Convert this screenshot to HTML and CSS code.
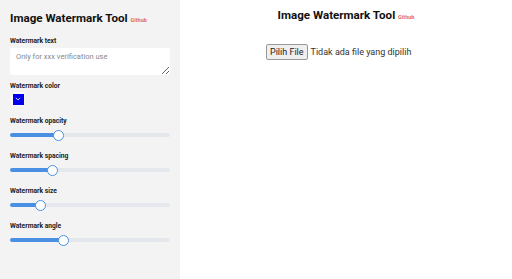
FILE: index.html
```html
<!DOCTYPE html>
<html>
  <head>
    <title>Image Watermark Tool</title>
    <link rel="stylesheet" href="styles.css">
  </head>
  <body>
    <div class="layout">
      <aside class="sidebar">
        <h1>Image Watermark Tool <a class="github" href="#">Github</a></h1>

        <label class="field-label first">Watermark text</label>
        <textarea class="text-input" placeholder="Only for xxx verification use"></textarea>

        <label class="field-label">Watermark color</label>
        <div class="color-box"><span class="swatch"><svg width="6" height="4" viewBox="0 0 6 4"><path d="M0.8 0.8 L3 3 L5.2 0.8" fill="none" stroke="#fff" stroke-width="0.8"/></svg></span></div>

        <label class="field-label">Watermark opacity</label>
        <input class="slider" type="range" min="0" max="100" value="29" style="--fill: 29%">

        <label class="field-label">Watermark spacing</label>
        <input class="slider" type="range" min="0" max="100" value="25" style="--fill: 25%">

        <label class="field-label">Watermark size</label>
        <input class="slider" type="range" min="0" max="100" value="17" style="--fill: 17%">

        <label class="field-label">Watermark angle</label>
        <input class="slider" type="range" min="0" max="100" value="32" style="--fill: 32%">
      </aside>

      <main class="content">
        <h1>Image Watermark Tool <a class="github" href="#">Github</a></h1>
        <div class="file-row">
          <span class="file-btn">Pilih File</span>
          <span class="file-name">Tidak ada file yang dipilih</span>
        </div>
      </main>
    </div>
  </body>
</html>
```

FILE: styles.css
```css
body {
  margin: 0;
  font-family: Roboto, "Liberation Sans", sans-serif;
  background: #fff;
}

.layout {
  display: flex;
  height: 279px;
}

.sidebar {
  width: 160px;
  padding: 10px 10px 0;
  background-color: #f3f3f3;
  display: flex;
  flex-direction: column;
  align-items: flex-start;
}

.sidebar > * {
  flex-shrink: 0;
}

h1 {
  margin: 0;
  font-size: 11.6px;
  line-height: 16px;
  font-weight: 700;
  color: #111;
}

.github {
  color: #e06a6a;
  font-size: 5.5px;
  font-weight: 700;
  text-decoration: none;
}

.field-label {
  font-size: 6.7px;
  line-height: 8px;
  font-weight: 700;
  color: #222;
  margin: 0 0 3px;
}

.field-label.first {
  margin-top: 9px;
}

.text-input {
  box-sizing: border-box;
  width: 160px;
  height: 27px;
  border: none;
  border-radius: 2px;
  padding: 4px 6px;
  font-family: Roboto, sans-serif;
  font-size: 7.5px;
  resize: vertical;
  background: #fff;
  margin: 0 0 7px;
}

.text-input::placeholder {
  color: #888;
}

.color-box {
  width: 14px;
  height: 14px;
  margin: -1px 0 11px 1px;
  border-radius: 2px;
  background: #fafafa;
  display: flex;
  align-items: center;
  justify-content: center;
}

.swatch {
  width: 11px;
  height: 11px;
  background: #0000ee;
  display: flex;
  align-items: center;
  justify-content: center;
}

.slider {
  -webkit-appearance: none;
  appearance: none;
  width: 160px;
  height: 4px;
  margin: 5px 0 15px;
  border-radius: 2px;
  background: linear-gradient(to right, #4a90e2 var(--fill), #e4e7ec var(--fill));
  outline: none;
}

.slider::-webkit-slider-thumb {
  -webkit-appearance: none;
  width: 11px;
  height: 11px;
  border-radius: 50%;
  background: #fff;
  border: 1px solid #4a90e2;
  box-sizing: border-box;
}

.content {
  flex: 1;
  display: flex;
  flex-direction: column;
  align-items: center;
  padding-top: 7px;
}

.file-row {
  align-self: flex-start;
  margin: 19px 0 0 86px;
  display: flex;
  align-items: center;
  gap: 3px;
  font-size: 9px;
  color: #333;
}

.file-btn {
  background: #efefef;
  border: 1px solid #999;
  border-radius: 2px;
  padding: 2px 3px;
  color: #222;
}
```
